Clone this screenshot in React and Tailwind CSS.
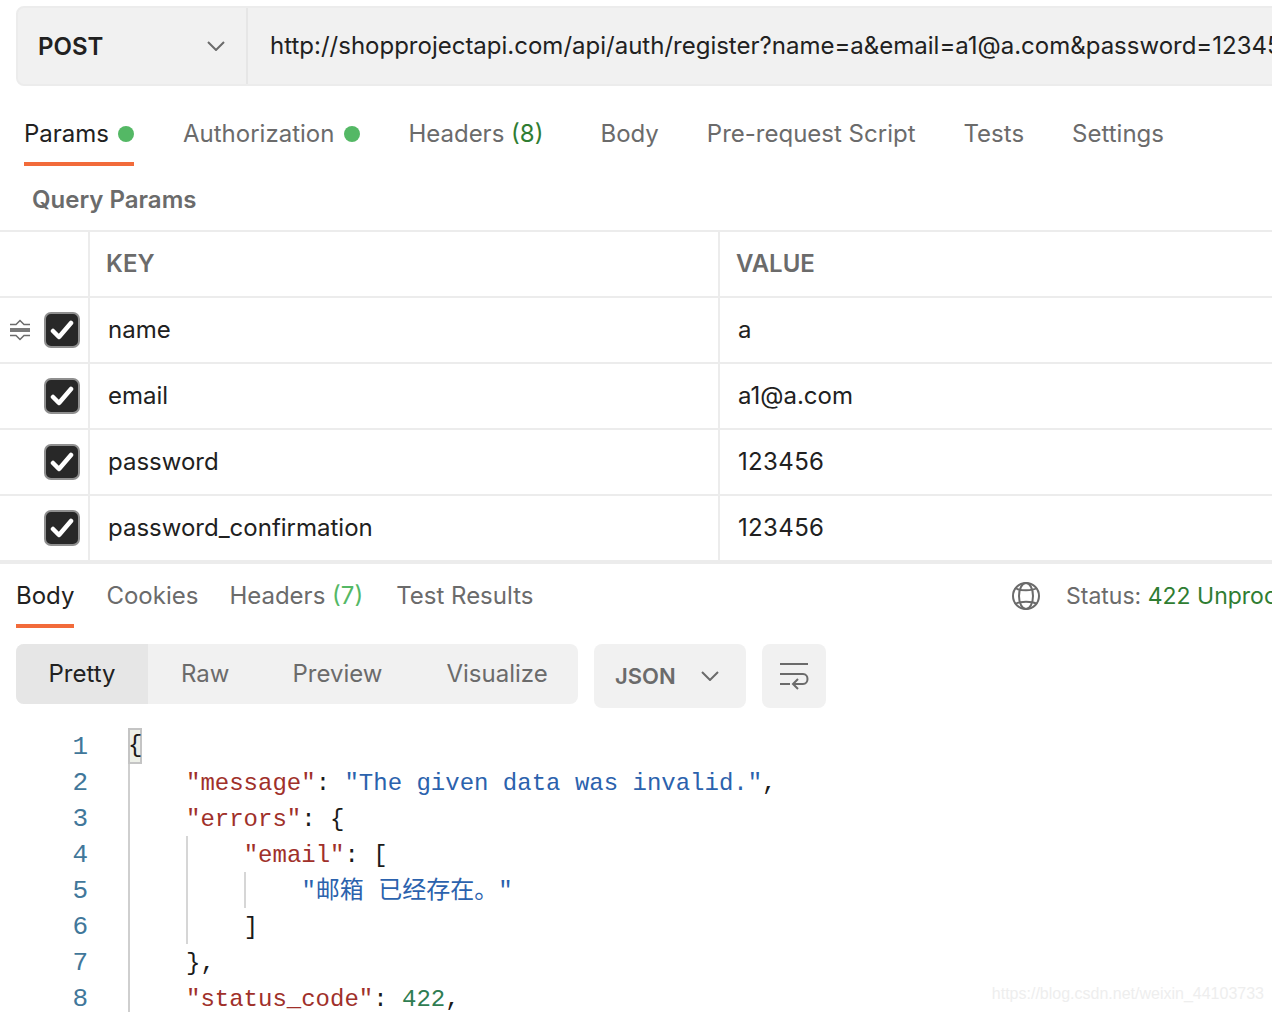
import React from 'react';

const Dot = () => <span className="w-4 h-4 rounded-full bg-[#54b865] shrink-0" />;

const Chevron = () => (
  <svg className="shrink-0" width="18" height="10" viewBox="0 0 18 10" fill="none" stroke="#6b6b6b" strokeWidth="2">
    <path d="M1 1l8 8 8-8" />
  </svg>
);

const Check = () => (
  <span className="w-[36px] h-[36px] rounded-[7px] bg-[#282828] border-2 border-[#8f8f8f] flex items-center justify-center shrink-0">
    <svg width="24" height="20" viewBox="0 0 24 20" fill="none" stroke="#fff" strokeWidth="4.500" strokeLinecap="round" strokeLinejoin="round">
      <path d="M3 11l6 6L21 3" />
    </svg>
  </span>
);

const Drag = () => (
  <svg className="shrink-0" width="22" height="24" viewBox="0 0 22 24" fill="none" stroke="#6b6b6b" strokeWidth="1.500">
    <path d="M1 6.500h6l4-4 4 4h6M1 17.500h6l4 4 4-4h6" />
    <path d="M1 12h20" strokeWidth="4" stroke="#7a7a7a" />
  </svg>
);

const Globe = () => (
  <svg className="shrink-0" width="30" height="30" viewBox="0 0 30 30" fill="none" stroke="#6b6b6b" strokeWidth="2">
    <circle cx="15" cy="15" r="13" />
    <ellipse cx="15" cy="15" rx="7" ry="13" />
    <path d="M4 7c5 3 17 3 22 0M4 23c5-3 17-3 22 0" />
  </svg>
);

const Wrap = () => (
  <svg className="shrink-0" width="30" height="28" viewBox="0 0 30 28" fill="none" stroke="#6b6b6b" strokeWidth="2">
    <path d="M1 2h28M1 12h23c6 0 6 10 0 10h-9M1 22h10M19 17l-5 5 5 5" />
  </svg>
);

const params = [
  ['name', 'a', true],
  ['email', 'a1@a.com'],
  ['password', '123456'],
  ['password_confirmation', '123456'],
];

const Row = ({ k, v, drag }) => (
  <div className="flex h-[66px] border-b-2 border-[#ececec] last:border-b-0 last:h-[64px]">
    <div className="w-[90px] shrink-0 border-r-2 border-[#ececec] flex items-center pl-[9px]">
      <span className="w-[22px] mr-[13px] flex">{drag && <Drag />}</span>
      <Check />
    </div>
    <div className="w-[630px] shrink-0 border-r-2 border-[#ececec] pl-[18px] flex items-center text-[#212121]">{k}</div>
    <div className={`pl-[18px] flex items-center text-[#212121] ${v === '123456' ? 'tracking-[0.35px]' : ''}`}>{v}</div>
  </div>
);

const C = {
  key: 'text-[#a0302a]',
  str: 'text-[#2b62ad]',
  num: 'text-[#2f7d52]',
};

const Line = ({ n, indent = 0, children, guides = [] }) => (
  <div className="flex h-[36px] leading-[40px]">
    <div className="w-[88px] shrink-0 text-right text-[#41779a] text-[26px] leading-[38px]">{n}</div>
    <div className="ml-[40px] relative flex-1 border-l-2 border-[#cfcfcf] pl-[56px]">
      {guides.map((g) => (
        <span key={g} className="absolute top-0 bottom-0 w-[2px] bg-[#d6d6d6]" style={{ left: g }} />
      ))}
      <span className="whitespace-pre" style={{ marginLeft: indent * 57.7 }}>{children}</span>
    </div>
  </div>
);

export default function App() {
  return (
    <div className="w-[1272px] h-[1012px] overflow-hidden bg-white relative font-['Inter',sans-serif] text-[24px]">
      {/* url bar */}
      <div className="pt-[6px] pl-[16px]">
        <div className="flex h-[80px] w-[1400px] bg-[#f1f1f1] border-2 border-[#ececec] rounded-[8px]">
          <div className="w-[230px] shrink-0 flex items-center justify-between pl-[20px] pr-[21px] border-r-2 border-[#e6e6e6]">
            <span className="font-semibold text-[#212121] pt-[2px]">POST</span>
            <Chevron />
          </div>
          <div className="pl-[22px] flex items-center whitespace-nowrap text-[#212121]">
            http://shopprojectapi.com/api/auth/register?name=a&amp;email=a1@a.com&amp;password=123456
          </div>
        </div>
      </div>

      {/* request tabs */}
      <div className="flex h-[80px] pl-[24px] text-[#6b6b6b]">
        <div className="h-[80px] flex items-center gap-[9px] border-b-4 border-[#f26b3a] pt-[20px] text-[#212121]">
          Params <Dot />
        </div>
        <div className="h-[80px] flex items-center gap-[10px] ml-[49px] pt-[20px] pb-[4px]">
          Authorization <Dot />
        </div>
        <div className="h-[80px] flex items-center ml-[48px] pt-[20px] pb-[4px]">
          Headers&nbsp;<span className="text-[#2f7d32]">(8)</span>
        </div>
        <div className="h-[80px] flex items-center ml-[57px] pt-[20px] pb-[4px]">Body</div>
        <div className="h-[80px] flex items-center ml-[48px] pt-[20px] pb-[4px]">Pre-request Script</div>
        <div className="h-[80px] flex items-center ml-[48px] pt-[20px] pb-[4px]">Tests</div>
        <div className="h-[80px] flex items-center ml-[48px] pt-[20px] pb-[4px]">Settings</div>
      </div>

      <div className="h-[64px] pl-[32px] flex items-center font-semibold text-[#6b6b6b] pt-[4px]">Query Params</div>

      {/* params table */}
      <div className="border-y-2 border-[#ececec]">
        <div className="flex h-[66px] border-b-2 border-[#ececec] font-semibold text-[#6b6b6b]">
          <div className="w-[90px] shrink-0 border-r-2 border-[#ececec]" />
          <div className="w-[630px] shrink-0 border-r-2 border-[#ececec] pl-[16px] flex items-center">KEY</div>
          <div className="pl-[16px] flex items-center">VALUE</div>
        </div>
        {params.map(([k, v, drag]) => (
          <Row key={k} k={k} v={v} drag={drag} />
        ))}
      </div>
      <div className="h-[2px] bg-[#ececec]" />

      {/* response tabs */}
      <div className="flex h-[64px] pl-[16px] text-[#6b6b6b] items-start">
        <div className="h-[64px] flex items-center border-b-4 border-[#f26b3a] text-[#212121] pt-[4px]">Body</div>
        <div className="h-[64px] flex items-center ml-[32px]">Cookies</div>
        <div className="h-[64px] flex items-center ml-[31px]">
          Headers&nbsp;<span className="text-[#54b865]">(7)</span>
        </div>
        <div className="h-[64px] flex items-center ml-[33px]">Test Results</div>
        <div className="h-[64px] flex items-center ml-auto whitespace-nowrap w-[261px] shrink-0 text-[23px]">
          <Globe />
          <span className="ml-[25px]">Status:&nbsp;<span className="text-[#2f7d32]">422 Unprocessable</span></span>
        </div>
      </div>

      {/* toolbar */}
      <div className="flex pl-[16px] pt-[16px] items-start text-[#6b6b6b]">
        <div className="flex h-[60px] w-[562px] bg-[#f1f1f1] rounded-[8px] overflow-hidden">
          <div className="w-[132px] bg-[#e6e6e6] flex items-center justify-center text-[#212121]">Pretty</div>
          <div className="ml-[33px] flex items-center">Raw</div>
          <div className="ml-[63px] flex items-center">Preview</div>
          <div className="ml-[64px] flex items-center">Visualize</div>
        </div>
        <div className="ml-[16px] h-[64px] w-[152px] bg-[#f1f1f1] rounded-[8px] flex items-center justify-between pl-[21px] pr-[27px] font-semibold text-[22px]">
          JSON <Chevron />
        </div>
        <div className="ml-[16px] h-[64px] w-[64px] bg-[#f1f1f1] rounded-[8px] flex items-center justify-center">
          <Wrap />
        </div>
      </div>

      {/* code */}
      <div className="mt-[20px] font-['Liberation_Mono','Noto_Sans_CJK_SC',monospace] text-[24px] text-[#1a1a1a]">
        <div className="flex h-[36px] leading-[40px]">
          <div className="w-[88px] shrink-0 text-right text-[#41779a] text-[26px] leading-[38px]">1</div>
          <div className="ml-[40px] flex-1 relative border-l-2 border-[#cfcfcf]">
            <span className="absolute -left-[2px] top-0 w-[14px] h-[36px] bg-[#edf0e8] border-2 border-[#c4c4c4] leading-[32px] overflow-visible"><span className="-ml-[2px]">{'{'}</span></span>
          </div>
        </div>
        <Line n="2">
          <span className={C.key}>"message"</span>: <span className={C.str}>"The given data was invalid."</span>,
        </Line>
        <Line n="3">
          <span className={C.key}>"errors"</span>: {'{'}
        </Line>
        <Line n="4" indent={1} guides={[56]}>
          <span className={C.key}>"email"</span>: [
        </Line>
        <Line n="5" indent={2} guides={[56, 114]}>
          <span className={C.str}>"邮箱 已经存在。"</span>
        </Line>
        <Line n="6" indent={1} guides={[56]}>]</Line>
        <Line n="7">{'}'},</Line>
        <Line n="8">
          <span className={C.key}>"status_code"</span>: <span className={C.num}>422</span>,
        </Line>
      </div>

      <div className="absolute right-[8px] top-[982px] text-[16px] text-[#eeeeee] font-['Liberation_Sans',sans-serif] whitespace-nowrap">
        https://blog.csdn.net/weixin_44103733
      </div>
    </div>
  );
}
